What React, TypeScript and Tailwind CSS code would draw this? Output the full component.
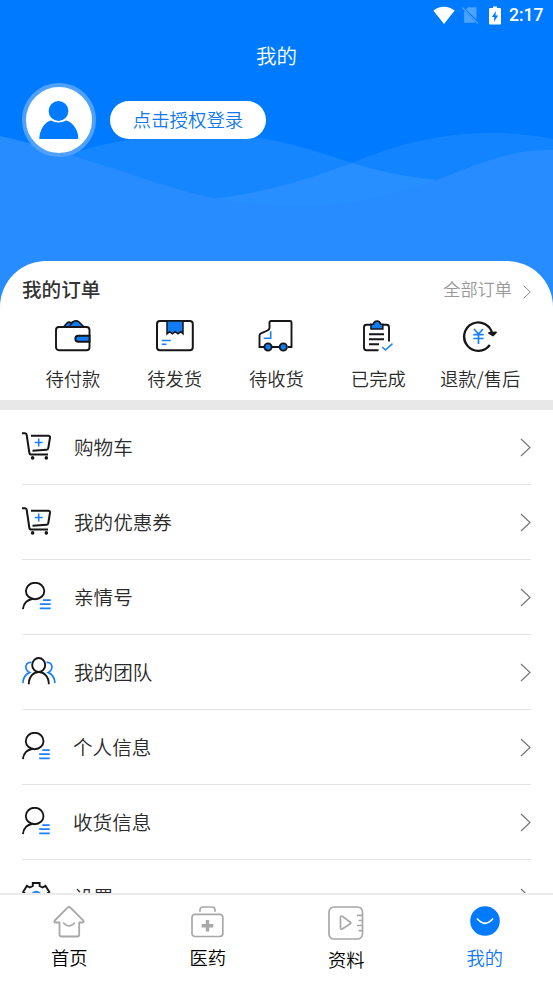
import type { ReactNode } from 'react';

const INK = '#161618';
const BLUE = '#0f7bf5';

const StatusBar = () => (
  <div className="flex h-[30px] items-center justify-end pr-[10px] text-white">
    <svg width="22" height="19" viewBox="0 0 22 19" fill="currentColor">
      <path d="M0.3 4.6C6 -0.7 16 -0.7 21.7 4.6L11 18Z" />
    </svg>
    <svg className="ml-[7px]" width="17" height="19" viewBox="0 0 17 19">
      <path d="M6 1.2H14.5V13.6L4 3.2ZM2.2 4.4L13.8 16.8H2.2Z" fill="#4da3ff" />
      <path d="M0.6 1.6L16 17.6" stroke="#4da3ff" strokeWidth="1.3" />
    </svg>
    <svg className="ml-[10px]" width="12" height="19" viewBox="0 0 12 19">
      <path d="M4 0.5H8V2H11Q12 2 12 3V17.5Q12 18.5 11 18.5H1Q0 18.5 0 17.5V3Q0 2 1 2H4Z" fill="#fff" />
      <path d="M7 5L2.8 11H5.4L4.8 16L9.2 9.6H6.5Z" fill="#007bff" />
    </svg>
    <span className="ml-[8px] w-[34px] whitespace-nowrap font-[Roboto] text-[17.5px] font-medium leading-[30px]">
      2:17
    </span>
  </div>
);

const Waves = () => (
  <svg className="absolute inset-0" width="553" height="261" viewBox="0 0 553 261">
    <path
      d="M60 158C95 144 135 137 180 134C225 132 252 136 277 141C308 148 330 156 352 163C385 173 410 177 437 180L450 182V261H60Z"
      fill="#fff"
      fillOpacity="0.085"
    />
    <path
      d="M190 201C240 197 280 187 305 179C325 173 337 168 352 163C385 149 410 142 440 137C480 131 520 132 553 139V261H190Z"
      fill="#fff"
      fillOpacity="0.075"
    />
    <path
      d="M0 136C40 145 80 158 115 169C165 186 195 195 225 200C260 206 295 208 330 205C385 199 420 186 450 175C485 161 515 149 553 150V261H0Z"
      fill="#268cff"
    />
  </svg>
);

const Chevron = ({ small }: { small?: boolean }) => (
  <svg
    className={small ? 'mt-[6px]' : 'mt-px'}
    width={small ? 8 : 11}
    height={small ? 14 : 19}
    viewBox="0 0 11 19"
    preserveAspectRatio="none"
    fill="none"
    stroke="#777"
    strokeWidth="1.2"
  >
    <path d="M1 1L10 9.5L1 18" />
  </svg>
);

const WalletIcon = () => (
  <svg width="36" height="32" viewBox="0 0 36 32" fill="none" stroke={INK} strokeWidth="1.9">
    <path d="M8.5 7L12 3Q14 1.3 16 3L18 1.7Q21.5 0 24 2L29 7Z" fill={BLUE} strokeWidth="1.6" />
    <path d="M18 1.7L14.5 6" strokeWidth="1.5" />
    <rect x="1" y="7" width="33.5" height="23.3" rx="3" fill="#fff" />
    <path d="M34.5 15.8H23.3Q20.3 15.8 20.3 18.8T23.3 21.8H34.5Z" fill={BLUE} />
  </svg>
);

const BoxIcon = () => (
  <svg width="38" height="32" viewBox="0 0 38 32" fill="none" stroke={INK} strokeWidth="2">
    <rect x="1" y="1" width="35.8" height="29.3" rx="3" />
    <path d="M11 1H27V13.8L24.8 11.6L22 13.8L19.2 11.6L16.4 13.8L13.6 11.6L11 13.8Z" fill={BLUE} strokeWidth="1.5" />
    <path d="M5.8 20.5H14.8M5.8 24.3H10.5" stroke="#1a80ff" strokeWidth="1.4" />
  </svg>
);

const TruckIcon = () => (
  <svg width="36" height="32" viewBox="0 0 36 32" fill="none" stroke={INK} strokeWidth="1.9">
    <path d="M6 27H1.5V15.5Q1.5 14 3 13.3L9.5 10.5Q11.5 9.5 11.5 8V2.5Q11.5 1 13 1H32Q33.5 1 33.5 2.5V27H30M21 27H14" />
    <path d="M12.7 11.3V18.3H5.7" stroke="#1a80ff" strokeWidth="1.6" />
    <circle cx="10" cy="27" r="3.6" fill={BLUE} />
    <circle cx="25.3" cy="27" r="3.6" fill={BLUE} />
  </svg>
);

const ClipboardIcon = () => (
  <svg width="32" height="32" viewBox="0 0 32 32" fill="none" stroke={INK} strokeWidth="1.9">
    <path d="M9 4.7H4.5Q2 4.7 2 7.2V27.5Q2 30.2 4.5 30.2H16.5M21 4.7H24.5Q27 4.7 27 7.2V21.5" />
    <path d="M9 9V4.3H11.3Q12 1 15 1T18.7 4.3H20.8V9Z" fill={BLUE} strokeWidth="1.6" />
    <path d="M7 14.3H22M7 19.3H22M7 24.3H17" />
    <path d="M20.3 27L23.5 30L30.5 23.7" stroke="#1a80ff" strokeWidth="1.6" />
  </svg>
);

const RefundIcon = () => (
  <svg width="36" height="32" viewBox="0 0 36 32" fill="none" stroke={INK} strokeWidth="2.3">
    <path d="M27.8 25A14.2 14.2 0 1 1 30.3 14" />
    <path d="M27 13L34 12.3L31 15.5Z" fill={INK} strokeWidth="1.8" strokeLinejoin="round" />
    <path d="M12 9L16.5 14L21 9M11.3 14.7H21.7M11.3 18.5H21.7M16.5 14.5V24" stroke="#1a80ff" strokeWidth="1.7" />
  </svg>
);

const CartIcon = () => (
  <svg width="30" height="28" viewBox="0 0 30 28" fill="none" stroke={INK} strokeWidth="2">
    <path d="M0 1.2H3.2Q4.4 1.2 4.7 3L7.3 20.5Q7.6 22.6 9.3 22.6H26" />
    <path d="M9 3.8H26.3Q28.2 3.8 28 5.6L26.3 16Q26.1 17.7 24.6 17.8L10.5 18.8" />
    <circle cx="10.6" cy="25.9" r="1.8" fill={INK} stroke="none" />
    <circle cx="24.3" cy="25.9" r="1.8" fill={INK} stroke="none" />
    <path d="M12.7 10.5H20.7M16.7 6.5V14.5" stroke="#1a80ff" strokeWidth="1.6" />
  </svg>
);

const PersonIcon = ({ narrow }: { narrow?: boolean }) => (
  <svg
    width={narrow ? 28 : 29}
    height="28"
    viewBox="0 0 29 28"
    preserveAspectRatio="none"
    fill="none"
    stroke={INK}
    strokeWidth="1.9"
  >
    <ellipse cx="13.1" cy="9" rx="9.2" ry="8.2" />
    <path d="M11 16.8C5 17.8 1.5 21.5 0.9 27.2" />
    <path d="M21 18.2H28.7M17.8 22.2H28.7M17.8 26.3H28.7" stroke="#1a80ff" strokeWidth="1.8" />
  </svg>
);

const TeamIcon = () => (
  <svg width="34" height="28" viewBox="0 0 34 28" fill="none" stroke={INK} strokeWidth="1.9">
    <path
      d="M9.3 5.4C5 5 3.4 8.3 4 11.3C4.4 13.2 5.5 14.7 7.5 15.6C3.5 17.4 1 20.5 0.9 26M24.5 5.4C28.8 5 30.4 8.3 29.8 11.3C29.4 13.2 28.3 14.7 26.3 15.6C30.3 17.4 32.8 20.5 32.9 26"
      stroke="#1a80ff"
      strokeWidth="1.7"
    />
    <ellipse cx="16.7" cy="8" rx="6.5" ry="7" />
    <path d="M6.8 27.2C6.8 11 26.8 11 26.8 27.2" />
  </svg>
);

const GearIcon = () => (
  <svg width="29" height="28" viewBox="0 0 29 28" fill="none" stroke={INK} strokeWidth="1.9">
    <path d="M10.8 4V1H17.6V4L20.5 5.5L23.5 3.8L27.3 10L24.7 12V16L27.3 18L23.5 24.2L20.5 22.5L17.6 24V27H10.8V24L7.9 22.5L4.9 24.2L1.1 18L3.7 16V12L1.1 10L4.9 3.8L7.9 5.5Z" />
    <circle cx="14.3" cy="14" r="4.3" stroke="#1a80ff" />
  </svg>
);

const HomeIcon = () => (
  <svg width="32" height="32" viewBox="0 0 32 32" fill="none" stroke="#a8a8a8" strokeWidth="1.8" strokeLinejoin="round">
    <path d="M14.3 1.8Q16 0.3 17.7 1.8L30.2 14.5Q31.5 16.5 29.5 16.5H26.2V28.5Q26.2 30.5 24.2 30.5H8.5Q6.5 30.5 6.5 28.5V16.5H2.5Q0.5 16.5 1.8 14.5Z" />
    <path d="M10.2 16.5Q16 23.5 21.8 16.5" strokeWidth="1.4" />
  </svg>
);

const MedicineIcon = () => (
  <svg width="33" height="32" viewBox="0 0 33 32" fill="none" stroke="#a8a8a8" strokeWidth="1.7">
    <path d="M9 5.8V4Q9 1 12 1H21Q24 1 24 4V5.8" />
    <rect x="1" y="8.3" width="30.8" height="22.2" rx="3" />
    <path d="M16.5 14V25.5M10.7 19.7H22.3" strokeWidth="3.4" />
  </svg>
);

const MaterialIcon = () => (
  <svg width="36" height="34" viewBox="0 0 36 34" fill="none" stroke="#a8a8a8" strokeWidth="1.7">
    <rect x="1" y="1" width="33.5" height="32" rx="5" />
    <path d="M12.5 11.2V22.2Q12.8 23.8 14.3 23L22.3 17.8Q23.3 17 22.3 16.2L14.3 10.3Q12.8 9.7 12.5 11.2Z" />
    <path d="M29 9.3H34M30.5 14.5H34M29 19.5H34M30.5 24.7H34" />
  </svg>
);

const MineIcon = () => (
  <svg width="30" height="30" viewBox="0 0 30 30" fill="none">
    <circle cx="15" cy="15" r="14.8" fill="#007bff" />
    <path d="M7 12.5Q15 22 23 12.5" stroke="#fff" strokeWidth="1.8" />
  </svg>
);

const orders: { label: string; icon: ReactNode }[] = [
  { label: '待付款', icon: <WalletIcon /> },
  { label: '待发货', icon: <BoxIcon /> },
  { label: '待收货', icon: <TruckIcon /> },
  { label: '已完成', icon: <ClipboardIcon /> },
  { label: '退款/售后', icon: <RefundIcon /> },
];

const menus: { label: string; icon: ReactNode; narrow?: boolean }[] = [
  { label: '购物车', icon: <CartIcon /> },
  { label: '我的优惠券', icon: <CartIcon /> },
  { label: '亲情号', icon: <PersonIcon /> },
  { label: '我的团队', icon: <TeamIcon /> },
  { label: '个人信息', icon: <PersonIcon narrow />, narrow: true },
  { label: '收货信息', icon: <PersonIcon narrow />, narrow: true },
  { label: '设置', icon: <GearIcon /> },
];

const tabs: { label: string; icon: ReactNode; active?: boolean }[] = [
  { label: '首页', icon: <HomeIcon /> },
  { label: '医药', icon: <MedicineIcon /> },
  { label: '资料', icon: <MaterialIcon /> },
  { label: '我的', icon: <MineIcon />, active: true },
];

export default function App() {
  return (
    <div className="flex h-[983px] w-[553px] flex-col overflow-hidden bg-white font-['Noto_Sans_CJK_SC',sans-serif] font-[350] text-[#2a2a2a]">
      <header className="relative h-[261px] shrink-0 overflow-hidden bg-[#007bff]">
        <Waves />
        <div className="relative">
          <StatusBar />
          <h1 className="h-[52px] text-center text-[20.5px] font-[350] leading-[51px] text-white">我的</h1>
          <div className="flex items-center pl-[22px] pt-[1px]">
            <div className="flex size-[74px] items-center justify-center rounded-full border-4 border-[#4fa1fb] bg-white">
              <svg width="40" height="40" viewBox="0 0 40 40" fill="#007bff">
                <circle cx="19.5" cy="11" r="9.9" />
                <path d="M0.3 39C0.3 30 6 21.5 12 20.5Q19.5 24.5 27 20.5C33 21.5 39.3 30 39.3 37.5Q39.3 39 38 39Z" />
              </svg>
            </div>
            <button
              type="button"
              className="ml-[14px] h-[38px] w-[156px] rounded-full bg-white pb-[2px] text-[18.4px] leading-[36px] text-[#0f78ee]"
            >
              点击授权登录
            </button>
          </div>
        </div>
      </header>

      <main className="min-h-0 flex-1 overflow-hidden">
        <section className="bg-[#268cff]">
          <div className="h-[139px] rounded-t-[46px] bg-white">
            <div className="flex h-[59px] items-center justify-between px-[22px] pb-[3px]">
              <h2 className="text-[19.6px] font-medium text-[#333]">我的订单</h2>
              <div className="flex items-center gap-[11px] text-[17.2px] text-[#999]">
                <span>全部订单</span>
                <Chevron small />
              </div>
            </div>
            <ul className="grid grid-cols-5 px-[22px]">
              {orders.map((order) => (
                <li key={order.label} className="flex flex-col items-center">
                  <div className="flex h-8 items-center">{order.icon}</div>
                  <span className="mt-[12px] text-[18.3px] leading-7">{order.label}</span>
                </li>
              ))}
            </ul>
          </div>
        </section>
        <div className="h-[10px] bg-[#e8e8e8]" />
        <ul className="px-[22px]">
          {menus.map((menu) => (
            <li key={menu.label} className="flex h-[75px] items-center border-b border-[#e3e3e3]">
              <div className={menu.narrow ? 'w-[51px] pb-[2px]' : 'w-[52px] pb-[2px]'}>{menu.icon}</div>
              <span className="flex-1 text-[19.6px]">{menu.label}</span>
              <Chevron />
            </li>
          ))}
        </ul>
      </main>

      <nav className="grid h-[90px] w-[554px] shrink-0 grid-cols-4 border-t-2 border-[#ebebeb] bg-white">
        {tabs.map((tab) => (
          <div key={tab.label} className="flex flex-col items-center pt-[11px]">
            {tab.icon}
            <span className={tab.active ? 'mt-[7px] text-[18.3px] leading-7 text-[#0f78ee]' : 'mt-[5px] text-[18.3px] leading-7 text-black'}>
              {tab.label}
            </span>
          </div>
        ))}
      </nav>
    </div>
  );
}
